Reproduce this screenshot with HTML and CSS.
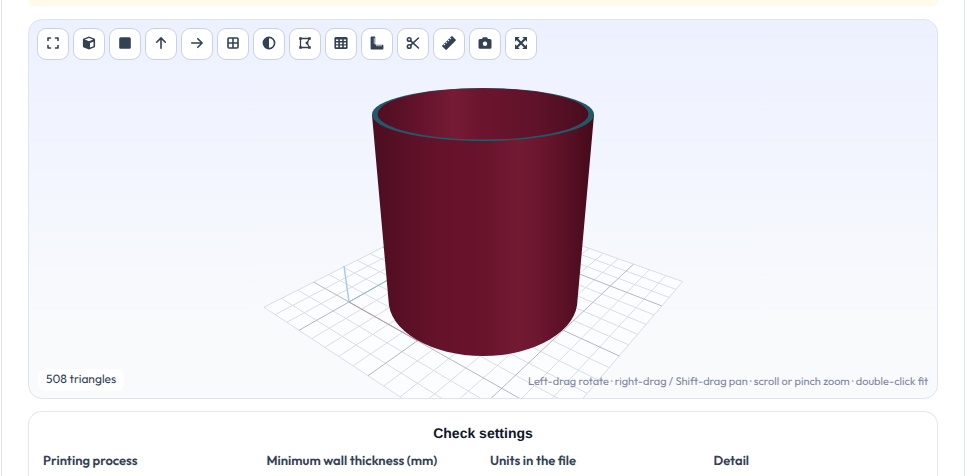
FILE: index.html
```html
<!DOCTYPE html>
<html lang="en">
<head>
<meta charset="utf-8">
<title>Model check</title>
<link rel="stylesheet" href="styles.css">
</head>
<body>
<main class="page">
  <div class="notice"></div>
  <section class="viewer" aria-label="Model viewer">
    <svg class="scene" viewBox="29 20 908 378" preserveAspectRatio="xMidYMid slice" aria-hidden="true">
      <defs>
        <linearGradient id="wall">
          <stop offset="0" stop-color="#4b0e20"/>
          <stop offset=".12" stop-color="#580f25"/>
          <stop offset=".3" stop-color="#65122a"/>
          <stop offset=".52" stop-color="#6a142c"/>
          <stop offset=".66" stop-color="#731a33"/>
          <stop offset=".76" stop-color="#6b152e"/>
          <stop offset=".9" stop-color="#560f24"/>
          <stop offset="1" stop-color="#430b1a"/>
        </linearGradient>
        <linearGradient id="hollow">
          <stop offset="0" stop-color="#500e22"/>
          <stop offset=".2" stop-color="#64132b"/>
          <stop offset=".36" stop-color="#761b35"/>
          <stop offset=".5" stop-color="#6c142d"/>
          <stop offset=".75" stop-color="#60122a"/>
          <stop offset="1" stop-color="#480d1e"/>
        </linearGradient>
      </defs>
      <g id="floor"></g>
      <path d="M372 115L388.500 300A94.500 56 0 0 0 577.500 300L594 115Z" fill="url(#wall)"/>
      <ellipse cx="483" cy="114.500" rx="111" ry="26.500" fill="#22596a"/>
      <ellipse cx="483" cy="113.900" rx="105.500" ry="25.700" fill="url(#hollow)"/>
    </svg>
    <div class="toolbar" role="toolbar" aria-label="View tools">
      <button type="button" aria-label="Fit"><svg viewBox="0 0 14 14"><path class="line" d="M2 4.500V2h2.500M9.500 2H12v2.500M12 9.500V12H9.500M4.500 12H2V9.500"/></svg></button>
      <button type="button" aria-label="Isometric"><svg viewBox="0 0 14 14"><path d="M7 .5l5.200 1.900q.9.4.9 1.300v6.600q0 .9-.9 1.300L7 13.500l-5.200-1.900Q.9 11.200.9 10.300V3.700q0-.9.9-1.300z"/><path class="cut" d="M2.800 3.600L7 5.200l4.200-1.600L7 2.100zM8 7v4.500l3.500-1.300V5.700z"/></svg></button>
      <button type="button" aria-label="Front"><svg viewBox="0 0 14 14"><rect x="1.200" y="1.200" width="11.600" height="11.600" rx="1.500"/></svg></button>
      <button type="button" aria-label="Top"><svg viewBox="0 0 14 14"><path class="line" d="M7 12.300V2M2.700 6.200L7 1.900l4.300 4.300"/></svg></button>
      <button type="button" aria-label="Right"><svg viewBox="0 0 14 14"><path class="line" d="M1.700 7H12M7.800 2.700L12.100 7l-4.300 4.300"/></svg></button>
      <button type="button" aria-label="Wireframe"><svg viewBox="0 0 14 14"><path class="line" d="M3 2h8q1 0 1 1v8q0 1-1 1H3q-1 0-1-1V3q0-1 1-1zM7 2v10M2 7h10"/></svg></button>
      <button type="button" aria-label="Contrast"><svg viewBox="0 0 14 14"><circle class="line" cx="7" cy="7" r="5.600"/><path d="M7 1.400a5.600 5.600 0 0 0 0 11.200z"/></svg></button>
      <button type="button" aria-label="Edges"><svg viewBox="0 0 14 14"><path class="thin" d="M2.500 2.500h9L9 7l2.500 4.500h-9z"/><path d="M1.200 1.200h2.600v2.600H1.200zM10.200 1.200h2.600v2.600h-2.600zM7.700 5.700h2.600v2.600H7.700zM1.200 10.200h2.600v2.600H1.200zM10.200 10.200h2.600v2.600h-2.600z"/></svg></button>
      <button type="button" aria-label="Grid"><svg viewBox="0 0 14 14"><rect x=".4" y="1" width="13.200" height="12" rx="1.500"/><path class="cut" d="M2 3.400h2.300v1.700H2zM5.900 3.400h2.300v1.700H5.900zM9.800 3.400H12v1.700H9.800zM2 6.500h2.300v1.700H2zM5.900 6.500h2.300v1.700H5.900zM9.800 6.500H12v1.700H9.800zM2 9.600h2.300v1.700H2zM5.900 9.600h2.300v1.700H5.900zM9.800 9.600H12v1.700H9.800z"/></svg></button>
      <button type="button" aria-label="Axes"><svg viewBox="0 0 14 14"><path d="M1.500.6h2.900q.9 0 .9.900v7.200h7.200q.9 0 .9.900v2.900q0 .9-.9.900h-11q-.9 0-.9-.9v-11q0-.9.900-.9z"/><path class="gap" d="M5.400 3H3.700M5.400 5H3.700M5.400 7H3.700M7 8.600v1.700M9 8.600v1.700M11 8.600v1.700"/></svg></button>
      <button type="button" aria-label="Section"><svg viewBox="0 0 14 14"><circle class="line" cx="3.200" cy="3.500" r="1.800"/><circle class="line" cx="3.200" cy="10.500" r="1.800"/><path class="line" d="M4.700 4.900L12.500 12M4.700 9.100L12.500 2"/></svg></button>
      <button type="button" aria-label="Measure"><svg viewBox="0 0 14 14"><g transform="rotate(-45 7 7)"><rect x="-.2" y="3.900" width="14.400" height="6.200" rx="1"/><path class="gap" d="M2.700 3.800v1.900M5.500 3.800v1.900M8.300 3.800v1.900M11.100 3.800v1.900"/></g></svg></button>
      <button type="button" aria-label="Snapshot"><svg viewBox="0 0 14 14"><path d="M4 3l.6-1.300q.2-.5.8-.5h3.200q.6 0 .8.500L10 3h2q1.500 0 1.500 1.500v6.800q0 1.500-1.500 1.500H2Q.5 12.800.5 11.300V4.500Q.5 3 2 3z"/><circle class="cut" cx="7" cy="7.800" r="2.200"/></svg></button>
      <button type="button" aria-label="Full screen"><svg viewBox="0 0 14 14"><path class="heavy" d="M3 3l8 8M11 3l-8 8"/><path d="M1 1h4.800L1 5.800zM13 1v4.800L8.200 1zM13 13H8.200L13 8.200zM1 13V8.200L5.800 13z"/></svg></button>
    </div>
    <div class="count">508 triangles</div>
    <div class="hint">Left-drag rotate · right-drag / Shift-drag pan · scroll or pinch zoom · double-click fit</div>
  </section>
  <section class="settings">
    <h2>Check settings</h2>
    <div class="fields">
      <div class="field">Printing process</div>
      <div class="field">Minimum wall thickness (mm)</div>
      <div class="field">Units in the file</div>
      <div class="field">Detail</div>
    </div>
  </section>
</main>
<script src="script.js"></script>
</body>
</html>
```
FILE: styles.css
```css
* { box-sizing: border-box; }
body {
  margin: 0;
  background: #fff;
  color: #334155;
  font-family: Outfit, Lato, "Liberation Sans", sans-serif;
  text-rendering: geometricPrecision;
}
.page {
  min-height: 100vh;
  margin: 0 1px;
  padding: 0 26px;
  border: solid #dfe5ee;
  border-width: 0 1px;
  overflow: hidden;
}
.notice {
  height: 6px;
  border-radius: 0 0 8px 8px;
  background: #fffbe8;
}
.viewer {
  position: relative;
  height: 380px;
  margin-top: 13px;
  border: 1px solid #dfe4ee;
  border-radius: 14px;
  background: linear-gradient(#edf1ff, #f8fafc 80%);
  overflow: hidden;
}
.scene { display: block; width: 100%; height: 100%; }
.plane { fill: #fff; fill-opacity: .6; }
.minor { stroke: #dadde6; stroke-width: 1; }
.major { stroke: #b5b8c2; stroke-width: 1; }
.toolbar {
  position: absolute;
  top: 8px;
  left: 8px;
  display: flex;
  gap: 4px;
}
.toolbar button {
  display: grid;
  place-items: center;
  width: 32px;
  height: 32px;
  padding: 0 0 2px;
  border: 1px solid #cbd0df;
  border-radius: 9px;
  background: #fff;
  color: #334155;
}
.toolbar svg { width: 14px; height: 14px; fill: currentColor; }
.toolbar .line, .toolbar .thin, .toolbar .heavy {
  fill: none;
  stroke: currentColor;
  stroke-width: 1.6;
  stroke-linecap: round;
  stroke-linejoin: round;
}
.toolbar .thin { stroke-width: 1.3; }
.toolbar .heavy { stroke-width: 2.2; }
.toolbar .cut { fill: #fff; }
.toolbar .gap { fill: none; stroke: #fff; stroke-width: 1; }
.count {
  position: absolute;
  left: 9px;
  bottom: 7px;
  padding: 3px 8px;
  border-radius: 8px;
  background: #fff;
  font-size: 12px;
  line-height: 16px;
}
.hint {
  position: absolute;
  right: 9px;
  bottom: 10px;
  color: #7c879b;
  font-size: 11px;
  line-height: 14px;
}
.settings {
  margin-top: 12px;
  padding: 12px 14px;
  border: 1px solid #e2e8f0;
  border-bottom: 0;
  border-radius: 14px 14px 0 0;
}
.settings h2 {
  margin: 0;
  color: #0f172a;
  font: bold 14px/18px "Liberation Sans", sans-serif;
  text-align: center;
}
.fields {
  display: grid;
  grid-template-columns: repeat(4, 1fr);
  gap: 14px;
  margin-top: 11px;
}
.field { font-size: 13px; font-weight: 600; line-height: 16px; white-space: nowrap; }
```
FILE: script.js
```js
const floor = document.getElementById("floor");
const MIN = -3, MAX = 13;

// Perspective projection of a floor point to scene coordinates.
function project(u, v) {
  const w = 1 - 0.01873 * u + 0.02519 * v;
  return [(5.873 * u + 24.2 * v + 349) / w, (1.357 * u - 1.11 * v + 302) / w];
}

function add(name, attrs) {
  const node = document.createElementNS("http://www.w3.org/2000/svg", name);
  for (const key in attrs) node.setAttribute(key, attrs[key]);
  floor.append(node);
}

function line(from, to, attrs) {
  add("line", { x1: from[0], y1: from[1], x2: to[0], y2: to[1], ...attrs });
}

add("polygon", {
  class: "plane",
  points: [[MIN, MIN], [MAX, MIN], [MAX, MAX], [MIN, MAX]].map(p => project(...p)).join(" ")
});
for (const major of [false, true]) {
  for (let i = MIN; i <= MAX; i++) {
    if ((i % 5 === 0) !== major) continue;
    const style = { class: major ? "major" : "minor" };
    line(project(i, MIN), project(i, MAX), style);
    line(project(MIN, i), project(MAX, i), style);
  }
}
line(project(0, 0), project(5, 0), { stroke: "#b39aa6" });
line(project(0, 0), project(0, 5), { stroke: "#94bdb5" });
line(project(0, 0), [344, 266], { stroke: "#a9c9f2", "stroke-width": 1.5 });
```
